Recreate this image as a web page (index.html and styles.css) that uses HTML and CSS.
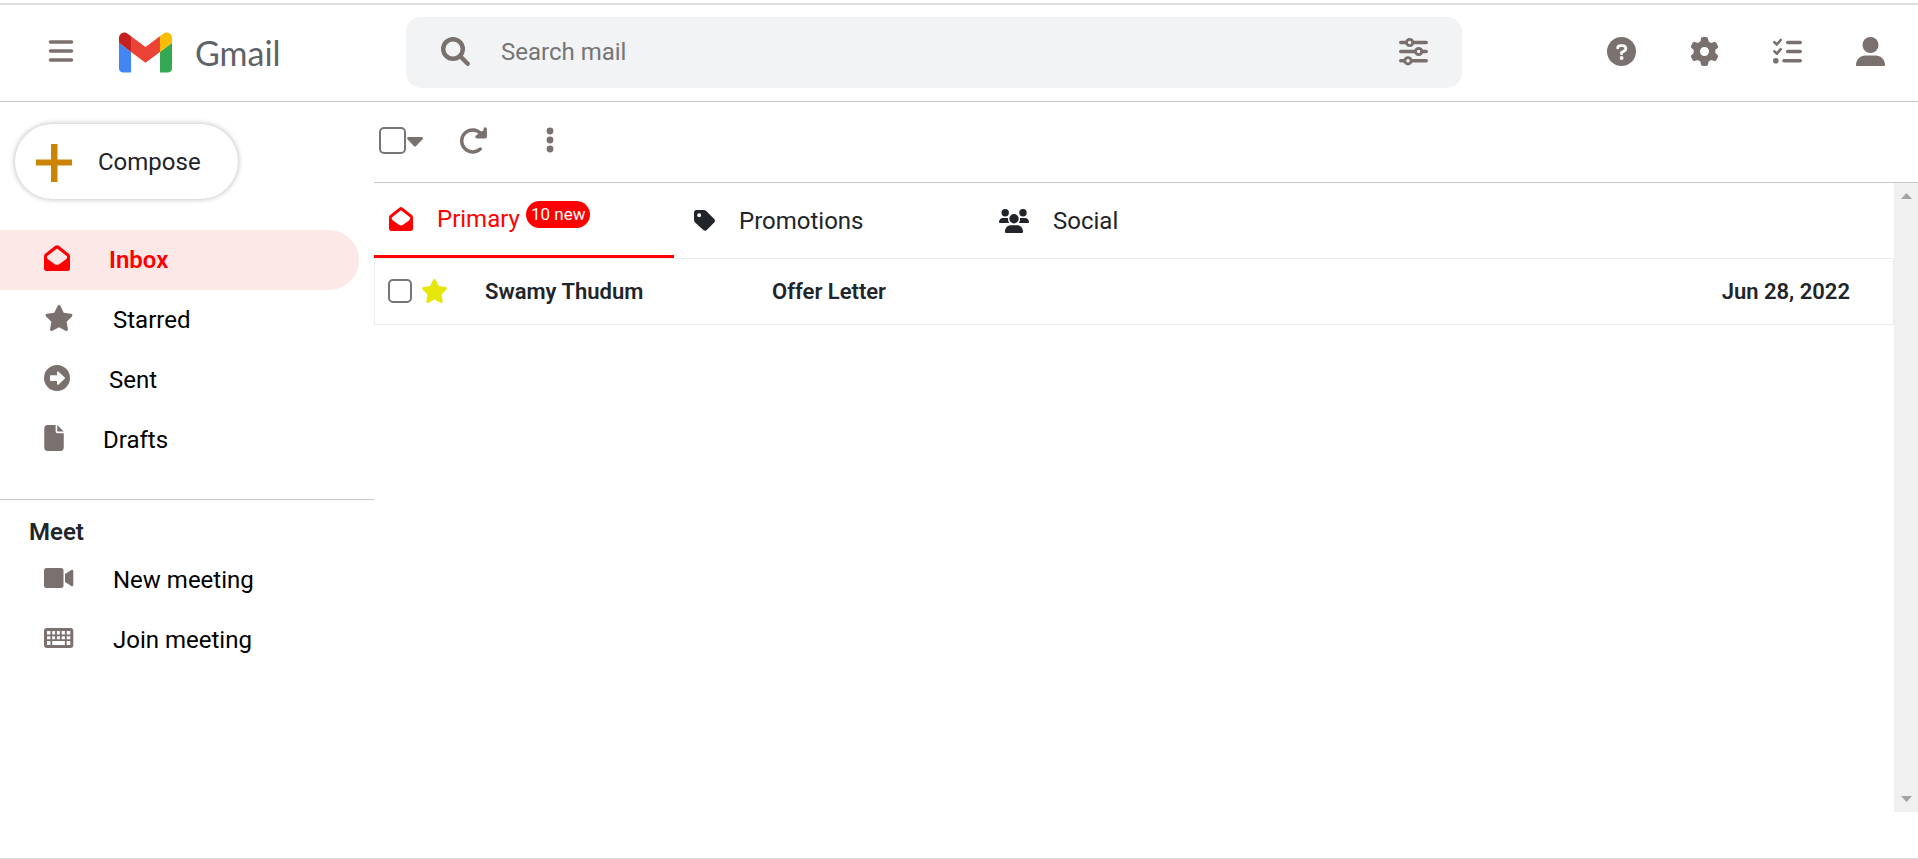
FILE: index.html
```html
<!DOCTYPE html>
<html lang="en">
<head>
<meta charset="utf-8">
<title>Gmail</title>
<link rel="stylesheet" href="styles.css">
</head>
<body>
<svg class="sprite" aria-hidden="true">
  <symbol id="envelope" viewBox="0 0 26 26"><path fill-rule="evenodd" d="M0 11.2C0 10.2.4 9.4 1.2 8.8L11.2.8C12.3-.1 13.7-.1 14.8.8L24.8 8.8C25.6 9.4 26 10.2 26 11.2V23.6C26 25 25 26 23.6 26H2.400C1 26 0 25 0 23.600ZM3 11.300C2.700 12.500 3.300 13.700 4.300 14.500L10.800 19.200C12.200 20.200 13.800 20.200 15.200 19.200L21.700 14.500C22.700 13.700 23.300 12.500 23 11.300L13 3.500Z"/></symbol>
  <symbol id="star" viewBox="0 0 576 512"><path d="M381.2 150.3L524.9 171.5C536.8 173.2 546.8 181.6 550.6 193.1C554.4 204.7 551.3 217.3 542.7 225.9L438.5 328.1L463.1 474.7C465.1 486.7 460.2 498.9 450.2 506C440.3 513.1 427.2 514 416.5 508.3L288.1 439.8L159.8 508.3C149 514 135.9 513.1 126 506C116.1 498.900 111.100 486.700 113.200 474.700L137.800 328.100L33.580 225.900C24.970 217.300 21.910 204.700 25.690 193.100C29.460 181.600 39.430 173.200 51.420 171.500L195 150.300L259.400 17.970C264.700 6.995 275.800 0 288.100 0C300.400 0 311.400 6.995 316.800 17.970L381.200 150.300z"/></symbol>
</svg>
<header class="header">
  <div class="brand">
    <button class="icon-btn" aria-label="Main menu"><svg width="26" height="24" viewBox="0 0 26 24"><path class="line" stroke-width="3.600" d="M2.500 3H23.500M2.500 12H23.500M2.500 21H23.500"/></svg></button>
    <a class="logo" href="#">
      <svg width="53" height="41" viewBox="52 42 88 66"><path fill="#4285f4" d="M58 108h14V74L52 59v43c0 3.320 2.690 6 6 6"/><path fill="#34a853" d="M120 108h14c3.320 0 6-2.690 6-6V59l-20 15"/><path fill="#fbbc04" d="M120 48v26l20-15v-8c0-7.420-8.470-11.650-14.400-7.200"/><path fill="#ea4335" d="M72 74V48l24 18 24-18v26L96 92"/><path fill="#c5221f" d="M52 51v8l20 15V48l-5.600-4.200c-5.940-4.450-14.400-.22-14.400 7.200"/></svg>
      <span class="logo-text">Gmail</span>
    </a>
  </div>
  <form class="search">
    <button class="icon-btn" type="button" aria-label="Search"><svg width="29" height="29" viewBox="0 0 29 29"><g class="line"><circle cx="12" cy="12" r="9.800" stroke-width="4.400"/><path stroke-width="4.400" d="M19.500 19.500L26.700 26.700"/></g></svg></button>
    <input class="search-input" type="text" placeholder="Search mail" aria-label="Search mail">
    <button class="icon-btn" type="button" aria-label="Search options"><svg width="29" height="29" viewBox="0 0 29 29"><g class="line"><path stroke-width="3.600" d="M1.800 5.500H7M14 5.500H27.200M1.800 14.500H16M23 14.500H27.200M1.800 23.800H5.500M12.500 23.800H27.200"/><g stroke-width="2.800"><circle cx="10.700" cy="5.500" r="3.200"/><circle cx="19.700" cy="14.500" r="3.200"/><circle cx="9" cy="23.800" r="3.200"/></g></g></svg></button>
  </form>
  <nav class="actions" aria-label="Account">
    <button class="icon-btn" aria-label="Help"><svg width="29" height="29" viewBox="0 0 29 29"><circle cx="14.500" cy="14.500" r="14.500"/><path fill="none" stroke="#fff" stroke-width="2.900" stroke-linecap="round" stroke-linejoin="round" d="M10.700 10.800C10.900 9.300 12 8.600 13.400 8.600H15.300C17.300 8.600 18.800 9.900 18.800 11.600C18.800 12.700 18.200 13.500 17.200 14.100L14.600 15.600V16.800"/><circle cx="14.600" cy="21" r="1.900" fill="#fff"/></svg></button>
    <button class="icon-btn" aria-label="Settings"><svg width="29" height="29" viewBox="0 0 512 512"><path d="M495.900 166.600c3.200 8.700 .5 18.400-6.400 24.600l-43.300 39.400c1.100 8.300 1.700 16.800 1.700 25.400s-.6 17.100-1.700 25.400l43.300 39.400c6.900 6.200 9.600 15.900 6.400 24.600c-4.400 11.900-9.700 23.300-15.800 34.300l-4.700 8.100c-6.600 11-14 21.400-22.100 31.200c-5.900 7.200-15.700 9.600-24.500 6.800l-55.700-17.700c-13.400 10.300-28.200 18.900-44 25.400l-12.500 57.100c-2 9.100-9 16.300-18.200 17.800c-13.800 2.300-28 3.500-42.500 3.500s-28.700-1.200-42.500-3.500c-9.200-1.500-16.200-8.700-18.200-17.800l-12.500-57.100c-15.800-6.500-30.600-15.100-44-25.400L83.100 425.900c-8.800 2.800-18.600 .3-24.500-6.800c-8.100-9.800-15.500-20.200-22.100-31.200l-4.700-8.100c-6.100-11-11.400-22.400-15.800-34.300c-3.200-8.700-.5-18.400 6.400-24.600l43.300-39.400C64.600 273.100 64 264.600 64 256s.6-17.100 1.700-25.400L22.400 191.200c-6.900-6.200-9.600-15.900-6.400-24.600c4.400-11.900 9.700-23.300 15.800-34.300l4.700-8.100c6.600-11 14-21.400 22.100-31.200c5.900-7.200 15.700-9.600 24.500-6.800l55.700 17.700c13.400-10.300 28.200-18.900 44-25.400l12.500-57.100c2-9.100 9-16.300 18.200-17.800C227.300 1.200 241.500 0 256 0s28.700 1.200 42.500 3.500c9.200 1.500 16.200 8.700 18.200 17.800l12.500 57.100c15.800 6.500 30.600 15.100 44 25.400l55.700-17.700c8.800-2.800 18.600-.3 24.500 6.800c8.100 9.800 15.500 20.200 22.100 31.200l4.700 8.100c6.100 11 11.400 22.400 15.800 34.300zM256 336a80 80 0 1 0 0-160 80 80 0 1 0 0 160z"/></svg></button>
    <button class="icon-btn" aria-label="Tasks"><svg width="29" height="29" viewBox="0 0 29 29"><g class="line"><path stroke-width="3.600" d="M14.700 5.500H27.200M14.700 14.500H27.200M11 23.800H27.200"/><path stroke-width="2.600" stroke-linejoin="round" d="M1.400 5.200L3.900 7.500L7.700 3M1.400 14.400L3.900 16.700L7.700 12.200"/></g><circle cx="2.800" cy="23.800" r="2.800"/></svg></button>
    <button class="icon-btn" aria-label="Profile"><svg width="29" height="29" viewBox="0 0 29 29"><circle cx="14.500" cy="8" r="8"/><path d="M0 28C0 22.500 4.300 18.500 9.500 18.500H19.500C24.700 18.500 29 22.500 29 28C29 28.600 28.600 29 28 29H1C.4 29 0 28.600 0 28Z"/></svg></button>
  </nav>
</header>
<div class="layout">
  <aside class="sidebar">
    <button class="compose"><svg width="36" height="38" viewBox="0 0 36 38"><path fill="#cc8408" d="M15 0H21.500V15.500H36V21.500H21.500V38H15V21.500H0V15.500H15Z"/></svg>Compose</button>
    <nav class="nav" aria-label="Folders">
      <a class="nav-item active" href="#"><svg width="26" height="26"><use href="#envelope"/></svg>Inbox</a>
      <a class="nav-item" href="#"><svg width="30" height="26"><use href="#star"/></svg>Starred</a>
      <a class="nav-item" href="#"><svg width="26" height="26" viewBox="0 0 26 26"><path fill-rule="evenodd" d="M13 0A13 13 0 1 1 13 26A13 13 0 1 1 13 0ZM7 10.300C6.400 10.300 6 10.700 6 11.300V15C6 15.600 6.400 16 7 16H13V18.800C13 19.700 14 20.100 14.600 19.500L20.500 13.900C21 13.400 21 12.700 20.500 12.200L14.600 6.700C14 6.100 13 6.500 13 7.400V10.300Z"/></svg>Sent</a>
      <a class="nav-item" href="#"><svg width="20" height="26" viewBox="0 0 384 512"><path d="M0 64C0 28.700 28.700 0 64 0H224V128c0 17.700 14.300 32 32 32H384V448c0 35.300-28.700 64-64 64H64c-35.300 0-64-28.700-64-64V64zm384 64H256V0L384 128z"/></svg>Drafts</a>
    </nav>
    <section class="meet">
      <h2 class="meet-title">Meet</h2>
      <a class="nav-item" href="#"><svg width="30" height="20" viewBox="0 0 30 20"><rect width="19.500" height="20" rx="2.500"/><path d="M21 6L27.300 2C28.300 1.400 29.300 2 29.300 3V17C29.300 18 28.300 18.600 27.300 18L21 14Z"/></svg>New meeting</a>
      <a class="nav-item" href="#"><svg width="30" height="20" viewBox="0 0 30 20"><rect x="1.500" y="1.500" width="26.300" height="17" rx="1.500" fill="none" stroke="#7a706e" stroke-width="3"/><path fill="none" stroke="#7a706e" stroke-width="1.800" d="M2 7.300H27.500M2 12.200H27.500M7.300 2V18M12 2V12M16.800 2V12M21.800 2V18"/></svg>Join meeting</a>
    </section>
  </aside>
  <main class="main">
    <div class="toolbar">
      <div class="select">
        <input class="check check-lg" type="checkbox" aria-label="Select all">
        <button class="icon-btn caret" aria-label="Select options"><svg width="16" height="10" viewBox="0 0 16 10"><path d="M1.500 0H14.500C15.800 0 16.300 1.300 15.500 2.200L9.200 8.900C8.500 9.600 7.500 9.600 6.800 8.900L.5 2.200C-.3 1.300.2 0 1.500 0Z"/></svg></button>
      </div>
      <button class="icon-btn" aria-label="Refresh"><svg width="28" height="27" viewBox="0 0 28 27"><path class="line" stroke-width="3.400" d="M20.200 22A11 11 0 1 1 20.800 6.500"/><path class="line" stroke-width="3.400" stroke-linejoin="round" d="M25.200 2V9.800H17L25.200 4Z"/><path d="M17 9.800L25 2V9.800Z"/></svg></button>
      <button class="icon-btn" aria-label="More"><svg width="8" height="26" viewBox="0 0 8 26"><circle cx="4" cy="4" r="3.400"/><circle cx="4" cy="13" r="3.400"/><circle cx="4" cy="22" r="3.400"/></svg></button>
    </div>
    <div class="content">
      <div class="inbox">
        <nav class="tabs" aria-label="Categories">
          <a class="tab active" href="#"><svg width="24" height="24"><use href="#envelope"/></svg><span>Primary</span><span class="badge">10 new</span></a>
          <a class="tab" href="#"><svg width="21" height="21" viewBox="0 0 21 21"><path fill-rule="evenodd" d="M0 2.400C0 1 1 0 2.400 0H9.600C10.600 0 11.500.4 12.200 1L20.200 9C21.200 10 21.200 11.500 20.200 12.500L12.800 20C11.800 21 10.300 21 9.300 20L1.100 12.400C.4 11.700 0 10.800 0 9.800ZM5.200 3.200A2 2 0 1 0 5.200 7.200A2 2 0 1 0 5.200 3.200Z"/></svg><span>Promotions</span></a>
          <a class="tab" href="#"><svg width="30" height="24" viewBox="0 0 30 24"><circle cx="6.200" cy="3.700" r="3.700"/><circle cx="24" cy="3.700" r="3.700"/><circle cx="15" cy="9.800" r="4.700"/><path d="M4 9H8.500C9 9 9.200 9.300 9.100 9.800C8.900 11.500 9.500 13 10.300 14H.8C.3 14 0 13.700 0 13.200C0 10.800 1.700 9 4 9ZM26 9H21.500C21 9 20.800 9.300 20.900 9.800C21.100 11.500 20.500 13 19.700 14H29.200C29.700 14 30 13.700 30 13.200C30 10.800 28.300 9 26 9ZM12 16.300H18C21.500 16.300 24 19 24 22.700C24 23.500 23.500 24 22.700 24H7.300C6.500 24 6 23.500 6 22.700C6 19 8.500 16.300 12 16.300Z"/></svg><span>Social</span></a>
        </nav>
        <div class="mail">
          <input class="check" type="checkbox" aria-label="Select message">
          <button class="icon-btn mail-star" aria-label="Starred"><svg width="27" height="24"><use href="#star"/></svg></button>
          <span class="mail-from">Swamy Thudum</span>
          <span class="mail-subject">Offer Letter</span>
          <time class="mail-date" datetime="2022-06-28">Jun 28, 2022</time>
        </div>
      </div>
      <div class="scrollbar">
        <button class="scroll-btn" aria-label="Scroll up"><svg width="11" height="6" viewBox="0 0 11 6"><path d="M5.500 0L11 6H0Z"/></svg></button>
        <button class="scroll-btn" aria-label="Scroll down"><svg width="11" height="6" viewBox="0 0 11 6"><path d="M0 0H11L5.500 6Z"/></svg></button>
      </div>
    </div>
  </main>
</div>
</body>
</html>
```
FILE: styles.css
```css
* {
  box-sizing: border-box;
}

body {
  display: flex;
  flex-direction: column;
  min-height: 100vh;
  margin: 0;
  padding-top: 3px;
  border-bottom: 1px solid #cfdce8;
  background: #fff;
  color: #212529;
  font-family: Roboto, "Liberation Sans", sans-serif;
  font-size: 24px;
  line-height: 36px;
}

svg {
  display: block;
  flex: none;
  fill: #7a706e;
}

button {
  font: inherit;
  color: inherit;
}

a {
  color: inherit;
  text-decoration: none;
}

.sprite {
  position: absolute;
  width: 0;
  height: 0;
}

.line {
  fill: none;
  stroke: #7a706e;
  stroke-linecap: round;
}

.icon-btn {
  flex: none;
  padding: 0;
  border: 0;
  background: none;
}

/* Header */
.header {
  display: flex;
  align-items: center;
  padding: 12px 33px 13px 0;
  border-top: 2px solid #dcdcdc;
  border-bottom: 1px solid #c8c8c8;
}

.brand {
  display: flex;
  flex: none;
  align-items: center;
  gap: 45px;
  width: 406px;
  padding-left: 48px;
}

.logo {
  display: flex;
  align-items: center;
  gap: 23px;
}

.header .icon-btn {
  padding-bottom: 3px;
}

.logo-text {
  color: #5f6368;
  font-family: Lato, sans-serif;
  font-size: 34px;
}

.search {
  display: flex;
  flex: 1;
  align-items: center;
  gap: 31px;
  height: 71px;
  margin-right: 145px;
  padding: 0 34px 0 35px;
  border-radius: 15px;
  background: #f1f3f4;
}

.search-input {
  flex: 1;
  min-width: 0;
  padding: 0 0 2px;
  border: 0;
  outline: 0;
  background: none;
  color: inherit;
  font: inherit;
}

.search-input::placeholder {
  color: #757575;
}

.actions {
  display: flex;
  gap: 54px;
}

/* Sidebar */
.layout {
  display: flex;
  flex: 1;
}

.sidebar {
  flex: none;
  width: 374px;
}

.compose {
  display: flex;
  align-items: center;
  gap: 26px;
  height: 75px;
  margin: 22px 0 31px 15px;
  padding: 0 37px 0 21px;
  border: 0;
  border-radius: 38px;
  background: #fff;
  box-shadow: 0 0 5px 1px #c8c8c8;
}

.compose svg {
  margin-top: 2px;
}

.nav {
  padding-bottom: 29px;
  border-bottom: 1px solid #c8c8c8;
}

.nav-item {
  display: flex;
  align-items: center;
  gap: 39px;
  height: 60px;
  margin-right: 15px;
  padding-left: 44px;
  border-radius: 0 30px 30px 0;
  color: #000;
}

.nav-item svg {
  margin-bottom: 4px;
}

.nav-item.active {
  background: #fce8e6;
  color: #f00;
  font-weight: 600;
}

.active svg {
  fill: #f00;
}

.meet {
  padding-top: 14px;
}

.meet-title {
  margin: 0;
  padding-left: 29px;
  font-size: 24px;
  font-weight: 600;
}

/* Main pane */
.main {
  display: flex;
  flex: 1;
  flex-direction: column;
  min-width: 0;
}

.toolbar {
  display: flex;
  align-items: center;
  height: 81px;
  padding: 0 0 4px 5px;
  border-bottom: 1px solid #c8c8c8;
}

.select {
  display: flex;
  align-items: center;
  gap: 1px;
  margin-right: 37px;
}

.caret {
  padding-top: 4px;
}

.toolbar > .icon-btn {
  margin-right: 58px;
}

.check {
  flex: none;
  width: 24px;
  height: 24px;
  margin: 0;
  border: 2px solid #767676;
  border-radius: 5px;
  background: #fff;
  appearance: none;
}

.check-lg {
  width: 27px;
  height: 27px;
}

.content {
  display: flex;
  flex: 1;
  margin-bottom: 46px;
}

.inbox {
  flex: 1;
  min-width: 0;
}

.tabs {
  display: flex;
  gap: 5px;
}

.tab {
  display: flex;
  align-items: center;
  width: 300px;
  height: 75px;
  padding-left: 15px;
}

.tab svg {
  margin-right: 24px;
  fill: #212529;
}

.tab.active {
  border-bottom: 3px solid #f00;
  color: #f00;
}

.tab.active svg {
  fill: #f00;
}

.badge {
  margin: 0 0 9px 6px;
  padding: 0 5px;
  border-radius: 14px;
  background: #f00;
  color: #fff;
  font-size: 17px;
  line-height: 27px;
}

.mail {
  display: flex;
  align-items: center;
  height: 67px;
  padding: 0 43px 0 13px;
  border: 1px solid #ececec;
  font-size: 22px;
  font-weight: 600;
}

.mail .icon-btn,
.mail .check {
  margin-bottom: 2px;
}

.mail-star {
  margin: 0 37px 0 9px;
}

.mail-star svg {
  fill: #e6e60a;
}

.mail-from {
  width: 287px;
}

.mail-date {
  margin-left: auto;
}

.scrollbar {
  display: flex;
  flex: none;
  flex-direction: column;
  justify-content: space-between;
  width: 24px;
  padding: 10px 0;
  background: #f0f0f0;
}

.scroll-btn {
  display: flex;
  justify-content: center;
  padding: 0;
  border: 0;
  background: none;
}

.scroll-btn svg {
  fill: #a3a3a3;
}
```
